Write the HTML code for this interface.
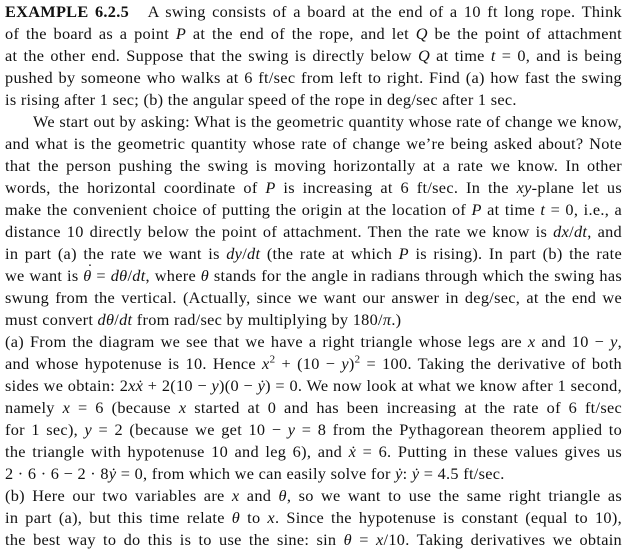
<!DOCTYPE html>
<html><head><meta charset="utf-8"><style>
html,body{margin:0;padding:0;background:#fff;}
body{width:629px;height:552px;overflow:hidden;font-family:"Liberation Serif","DejaVu Serif",serif;font-size:16.3px;letter-spacing:0.3px;color:#111;}
.t{position:absolute;left:5px;width:617px;}
.l{height:22px;line-height:22px;white-space:nowrap;text-align:justify;text-align-last:justify;overflow:visible;}
.e{text-align-last:left;}
.ind{padding-left:28px;}
b{font-weight:bold;}
.dot{position:relative;display:inline-block;line-height:16px;}
.dot::after{content:"˙";position:absolute;left:4px;top:-6px;font-style:normal;line-height:16px;}
</style></head><body>
<div class="t" style="top:1px">
<div class="l"><b>EXAMPLE 6.2.5</b> &nbsp; A swing consists of a board at the end of a 10 ft long rope. Think</div>
<div class="l">of the board as a point <i>P</i> at the end of the rope, and let <i>Q</i> be the point of attachment</div>
<div class="l">at the other end. Suppose that the swing is directly below <i>Q</i> at time <i>t</i> = 0, and is being</div>
<div class="l">pushed by someone who walks at 6 ft/sec from left to right. Find (a) how fast the swing</div>
<div class="l e">is rising after 1 sec; (b) the angular speed of the rope in deg/sec after 1 sec.</div>
<div class="l ind">We start out by asking: What is the geometric quantity whose rate of change we know,</div>
<div class="l">and what is the geometric quantity whose rate of change we’re being asked about? Note</div>
<div class="l">that the person pushing the swing is moving horizontally at a rate we know. In other</div>
<div class="l">words, the horizontal coordinate of <i>P</i> is increasing at 6 ft/sec. In the <i>xy</i>-plane let us</div>
<div class="l">make the convenient choice of putting the origin at the location of <i>P</i> at time <i>t</i> = 0, i.e., a</div>
<div class="l">distance 10 directly below the point of attachment. Then the rate we know is <i>dx</i>/<i>dt</i>, and</div>
<div class="l">in part (a) the rate we want is <i>dy</i>/<i>dt</i> (the rate at which <i>P</i> is rising). In part (b) the rate</div>
<div class="l">we want is <i class="dot">θ</i> = <i>dθ</i>/<i>dt</i>, where <i>θ</i> stands for the angle in radians through which the swing has</div>
<div class="l">swung from the vertical. (Actually, since we want our answer in deg/sec, at the end we</div>
<div class="l e">must convert <i>dθ</i>/<i>dt</i> from rad/sec by multiplying by 180/<i>π</i>.)</div>
<div class="l">(a) From the diagram we see that we have a right triangle whose legs are <i>x</i> and 10 − <i>y</i>,</div>
<div class="l">and whose hypotenuse is 10. Hence <i>x</i><sup style="font-size:11px;line-height:0">2</sup> + (10 − <i>y</i>)<sup style="font-size:11px;line-height:0">2</sup> = 100. Taking the derivative of both</div>
<div class="l">sides we obtain: 2<i>xẋ</i> + 2(10 − <i>y</i>)(0 − <i>ẏ</i>) = 0. We now look at what we know after 1 second,</div>
<div class="l">namely <i>x</i> = 6 (because <i>x</i> started at 0 and has been increasing at the rate of 6 ft/sec</div>
<div class="l">for 1 sec), <i>y</i> = 2 (because we get 10 − <i>y</i> = 8 from the Pythagorean theorem applied to</div>
<div class="l">the triangle with hypotenuse 10 and leg 6), and <i>ẋ</i> = 6. Putting in these values gives us</div>
<div class="l e">2 · 6 · 6 − 2 · 8<i>ẏ</i> = 0, from which we can easily solve for <i>ẏ</i>: <i>ẏ</i> = 4.5 ft/sec.</div>
<div class="l">(b) Here our two variables are <i>x</i> and <i>θ</i>, so we want to use the same right triangle as</div>
<div class="l">in part (a), but this time relate <i>θ</i> to <i>x</i>. Since the hypotenuse is constant (equal to 10),</div>
<div class="l">the best way to do this is to use the sine: sin <i>θ</i> = <i>x</i>/10. Taking derivatives we obtain</div>
</div>
</body></html>
